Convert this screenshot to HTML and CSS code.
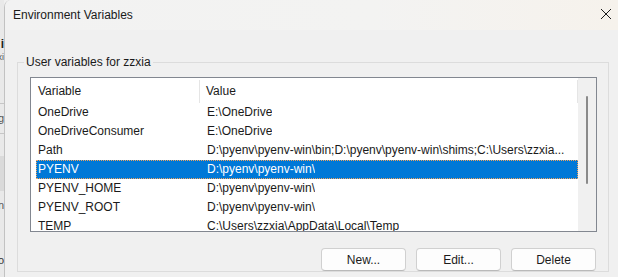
FILE: index.html
```html
<!DOCTYPE html>
<html lang="en">
<head>
    <meta charset="UTF-8">
    <title>Environment Variables</title>
    <link rel="stylesheet" href="styles.css">
</head>
<body>
    <div class="screen">
        <div class="backdrop">
            <div class="bd-gap" style="height: 38px"></div>
            <div class="bd-text bd-bold">i</div>
            <div class="bd-text bd-small">xi</div>
            <div class="bd-gap" style="height: 41px"></div>
            <div class="bd-line"></div>
            <div class="bd-text bd-tall">g</div>
            <div class="bd-line"></div>
            <div class="bd-gap" style="height: 22px"></div>
            <div class="bd-block"></div>
            <div class="bd-text bd-tall">n</div>
            <div class="bd-gap" style="height: 34px"></div>
            <div class="bd-text">o</div>
        </div>
        <div class="dialog">
            <div class="titlebar">
                <span class="title">Environment Variables</span>
                <svg class="close" width="12" height="12" viewBox="0 0 12 12">
                    <path d="M1 1L11 11M11 1L1 11" stroke="#1c1c1c" stroke-width="1" fill="none"/>
                </svg>
            </div>
            <div class="body">
                <fieldset class="group">
                    <legend>User variables for zzxia</legend>
                    <div class="listbox">
                        <div class="list">
                            <div class="list-head">
                                <div class="head-name">Variable</div>
                                <div class="head-value">Value</div>
                            </div>
                            <div class="rows">
                                <div class="row"><span class="col-name">OneDrive</span><span class="col-value">E:\OneDrive</span></div>
                                <div class="row"><span class="col-name">OneDriveConsumer</span><span class="col-value">E:\OneDrive</span></div>
                                <div class="row"><span class="col-name">Path</span><span class="col-value">D:\pyenv\pyenv-win\bin;D:\pyenv\pyenv-win\shims;C:\Users\zzxia...</span></div>
                                <div class="row selected"><span class="col-name">PYENV</span><span class="col-value">D:\pyenv\pyenv-win\</span></div>
                                <div class="row"><span class="col-name">PYENV_HOME</span><span class="col-value">D:\pyenv\pyenv-win\</span></div>
                                <div class="row"><span class="col-name">PYENV_ROOT</span><span class="col-value">D:\pyenv\pyenv-win\</span></div>
                                <div class="row"><span class="col-name">TEMP</span><span class="col-value">C:\Users\zzxia\AppData\Local\Temp</span></div>
                            </div>
                        </div>
                        <div class="scrollbar"><div class="thumb"></div></div>
                    </div>
                    <div class="buttons">
                        <button type="button">New...</button>
                        <button type="button">Edit...</button>
                        <button type="button">Delete</button>
                    </div>
                </fieldset>
            </div>
        </div>
    </div>
</body>
</html>
```

FILE: styles.css
```css
body {
    margin: 0;
    font-family: "Liberation Sans", Arial, sans-serif;
    font-size: 12px;
    color: #1a1a1a;
    background-color: #f0f0f0;
    overflow: hidden;
}
.screen {
    display: flex;
    width: 618px;
    height: 277px;
    overflow: hidden;
}

/* window behind the dialog */
.backdrop {
    width: 4px;
    flex: none;
    display: flex;
    flex-direction: column;
    background-color: #e9e9e9;
    overflow: hidden;
}
.bd-text {
    display: flex;
    justify-content: flex-end;
    white-space: nowrap;
    height: 12px;
    line-height: 12px;
    font-size: 11px;
    color: #333;
}
.bd-bold {
    height: 14px;
    font-weight: bold;
    font-size: 12px;
    color: #222;
}
.bd-small {
    height: 10px;
    line-height: 10px;
    font-size: 9px;
    color: #555;
}
.bd-tall {
    height: 29px;
    line-height: 29px;
    color: #555;
}
.bd-line {
    height: 1px;
    background-color: #c6c6c6;
}
.bd-block {
    height: 35px;
    background-color: #dadada;
}

/* dialog */
.dialog {
    flex: 1;
    display: flex;
    flex-direction: column;
    border-left: 1px solid #c2c2c2;
    border-top-left-radius: 7px;
    background-color: #f0f0f0;
    overflow: hidden;
}
.titlebar {
    height: 30px;
    flex: none;
    display: flex;
    align-items: center;
    justify-content: space-between;
    padding: 0 6px 0 8px;
    background: linear-gradient(to right, #f2f2f2, #f3f3f2 60%, #f6f2ec);
}
.title {
    color: #1a1a1a;
}
.close {
    margin-bottom: 2px;
}
.body {
    flex: 1;
    padding: 24px 9px 0 12px;
}
.group {
    margin: 0;
    padding: 0 11px 0 6px;
    border: 1px solid #dcdcdc;
    min-width: 0;
}
.group legend {
    padding: 0 2px;
    line-height: 16px;
    color: #1a1a1a;
}

/* list view */
.listbox {
    display: flex;
    height: 155px;
    margin: 7px 0 0 6px;
    border: 1px solid #828790;
    background-color: #fff;
    box-sizing: border-box;
}
.list {
    flex: 1;
    min-width: 0;
    display: flex;
    flex-direction: column;
}
.list-head {
    display: flex;
    height: 25px;
    flex: none;
}
.head-name,
.head-value {
    margin-top: 2px;
    height: 23px;
    line-height: 22px;
    border-right: 1px solid #e5e5e5;
    box-sizing: border-box;
}
.head-name {
    width: 169px;
    padding-left: 7px;
}
.head-value {
    flex: 1;
    padding-left: 6px;
}
.rows {
    flex: 1;
    min-height: 0;
    overflow: hidden;
}
.row {
    display: flex;
    height: 19px;
    line-height: 19px;
    margin-left: 5px;
    padding-left: 2px;
    white-space: nowrap;
}
.col-name {
    width: 169px;
    flex: none;
}
.col-value {
    overflow: hidden;
}
.row.selected {
    background-color: #0078d7;
    color: #fff;
    outline: 1px dotted #f3a35c;
    outline-offset: -1px;
}
.scrollbar {
    width: 18px;
    flex: none;
    background-color: #f0f0f0;
}
.thumb {
    width: 2px;
    height: 88px;
    margin: 18px 0 0 8px;
    border-radius: 1px;
    background-color: #8a8a8a;
}

/* buttons */
.buttons {
    display: flex;
    justify-content: flex-end;
    gap: 10px;
    margin: 16px 1px 0 0;
}
.buttons button {
    width: 85px;
    height: 23px;
    padding: 0;
    font-family: inherit;
    font-size: 12px;
    color: #1b1b1b;
    background-color: #fdfdfd;
    border: 1px solid #d0d0d0;
    border-bottom-color: #b9b9b9;
    border-radius: 4px;
}
```
